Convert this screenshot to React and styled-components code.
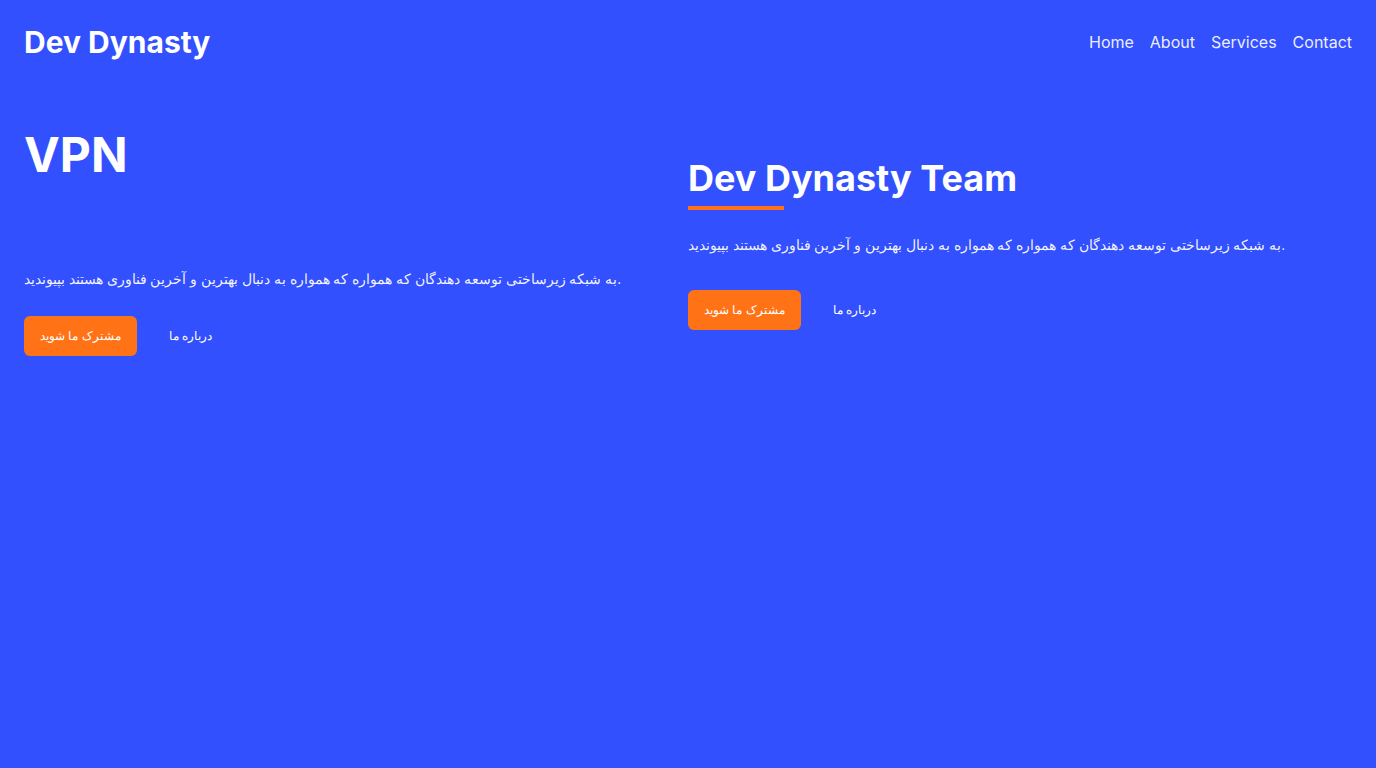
import React from "react";
import styled, { createGlobalStyle } from "styled-components";

const Global = createGlobalStyle`
  html, body { margin: 0; padding: 0; }
  body {
    background: #3350ff;
    font-family: Inter, sans-serif;
    color: #fff;
    min-height: 768px;
  }
`;

const Page = styled.div`
  min-height: 768px;
  background: #3350ff;
`;

const Header = styled.header`
  display: flex;
  align-items: center;
  justify-content: space-between;
  padding: 22px 24px;
  height: 40px;
`;

const Logo = styled.div`
  font-size: 30px;
  font-weight: 700;
`;

const Nav = styled.nav`
  display: flex;
  gap: 16px;
`;

const NavLink = styled.a`
  color: rgba(255, 255, 255, 0.92);
  font-size: 16px;
  text-decoration: none;
`;

const Hero = styled.section`
  display: grid;
  grid-template-columns: 1fr 1fr;
  align-items: center;
  padding: 41px 24px 0;
`;

const Column = styled.div`
  display: flex;
  flex-direction: column;
  align-items: flex-start;
`;

const BigTitle = styled.h1`
  margin: 0 0 82px;
  font-size: 48px;
  font-weight: 700;
  line-height: 60px;
`;

const Title = styled.h2`
  margin: 4px 0 0;
  font-size: 36px;
  font-weight: 700;
  line-height: 44px;
`;

const Underline = styled.div`
  width: 96px;
  height: 4px;
  background: #ff7316;
  margin: 6px 0 23px;
`;

const Text = styled.p`
  margin: 0 0 ${(p) => p.$gap}px;
  font-size: 13.6px;
  line-height: 24px;
  color: rgba(255, 255, 255, 0.95);
`;

const Buttons = styled.div`
  display: flex;
  align-items: center;
  gap: 8px;
`;

const Button = styled.button`
  height: 40px;
  border: none;
  border-radius: 6px;
  font-size: 11.6px;
  font-family: Inter, sans-serif;
  color: #fff;
  cursor: pointer;
  background: ${(p) => (p.$primary ? "#ff7316" : "transparent")};
  padding: ${(p) => (p.$primary ? "0 16px" : "0 24px")};
`;

const text =
  "به شبکه زیرساختی توسعه دهندگان که همواره که همواره به دنبال بهترین و  آخرین فناوری هستند بپیوندید.";

export default function App() {
  return (
    <Page>
      <Global />
      <Header>
        <Logo>Dev Dynasty</Logo>
        <Nav>
          <NavLink href="#">Home</NavLink>
          <NavLink href="#">About</NavLink>
          <NavLink href="#">Services</NavLink>
          <NavLink href="#">Contact</NavLink>
        </Nav>
      </Header>
      <Hero>
        <Column>
          <BigTitle>VPN</BigTitle>
          <Text $gap={25}>{text}</Text>
          <Buttons>
            <Button $primary>مشترک ما شوید</Button>
            <Button>درباره ما</Button>
          </Buttons>
        </Column>
        <Column>
          <Title>Dev Dynasty Team</Title>
          <Underline />
          <Text $gap={33}>{text}</Text>
          <Buttons>
            <Button $primary>مشترک ما شوید</Button>
            <Button>درباره ما</Button>
          </Buttons>
        </Column>
      </Hero>
    </Page>
  );
}
